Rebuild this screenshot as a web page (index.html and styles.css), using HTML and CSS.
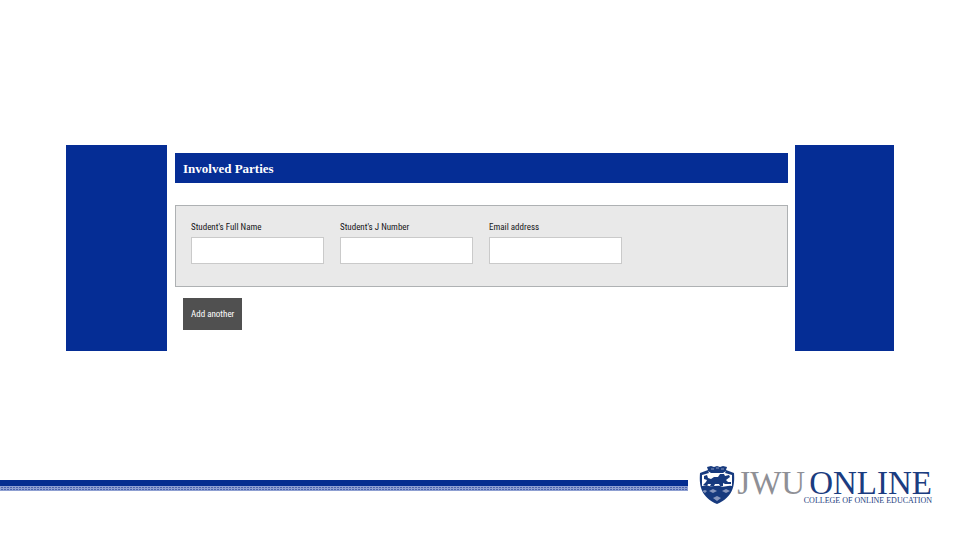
FILE: index.html
```html
<!DOCTYPE html>
<html lang="en">
<head>
    <meta charset="UTF-8">
    <meta name="viewport" content="width=device-width, initial-scale=1.0">
    <title>Involved Parties</title>
    <link rel="stylesheet" href="styles.css">
</head>
<body>
    <main class="stage">
        <form class="report-form">
            <h1 class="section-title">Involved Parties</h1>
            <div class="party">
                <div class="field">
                    <label for="full-name">Student's Full Name</label>
                    <input type="text" id="full-name">
                </div>
                <div class="field">
                    <label for="j-number">Student's J Number</label>
                    <input type="text" id="j-number">
                </div>
                <div class="field">
                    <label for="email">Email address</label>
                    <input type="email" id="email">
                </div>
            </div>
            <button type="button" class="add-btn">Add another</button>
        </form>
    </main>

    <footer class="footer">
        <div class="rule"></div>
        <div class="logo">
            <svg class="shield" viewBox="0 0 36 40" aria-hidden="true">
                <path fill="#173a7e" d="M8 2 L12 1 L15 2 L18 1 L21 2 L24 1 L28 2 L27 5 L35 8 C36 21 34 32 18 39 C2 32 0 21 1 8 L9 5 Z"/>
                <path fill="#fff" d="M3 10 L10 8 L9 6 L12 8 H24 L27 6 L26 8 L33 10 V21 C28 20 25 23 21 21 C17 20 14 22 10 21 C7 20 5 21 3 21 Z"/>
                <!-- lion -->
                <path fill="#173a7e" d="M5 11 L8 10 L9 13 L12 14 L15 12 L19 12 L21 9 L25 9 L26 11 L30 10 L31 12 L27 15 L29 17 L32 17 L32 19 L26 19 L24 18 L24 21 L21 21 L20 19 L16 19 L15 21 L11 21 L12 19 L9 19 L8 21 L4 20 L7 17 L8 15 L5 14 Z"/>
                <path fill="none" stroke="#8796bd" d="M12 4 H15 M17 3 H20 M22 4 H25"/>
                <!-- waves -->
                <path fill="#8796bd" d="M10 26 L14 24 L18 26 L14 28 Z M23 26 L27 24 L31 26 L27 28 Z M3 26 L6 25 L8 26 L6 28 Z M14 33 L18 31 L22 33 L18 36 Z"/>
            </svg>
            <div class="wordmark">
                <div class="wordmark-name"><span class="wordmark-jwu">JWU</span><span class="wordmark-online">ONLINE</span></div>
                <div class="wordmark-college">COLLEGE OF ONLINE EDUCATION</div>
            </div>
        </div>
    </footer>
</body>
</html>
```
FILE: styles.css
```css
* {
    box-sizing: border-box;
}
body {
    margin: 0;
    min-height: 100vh;
    display: flex;
    flex-direction: column;
    justify-content: space-between;
    background-color: #fff;
    font-family: "Roboto Condensed", Roboto, "Liberation Sans", sans-serif;
}
.stage {
    margin: 145px 66px 0;
    padding: 0 99px 0 101px;
    background: linear-gradient(#052d95, #052d95) left / 101px 100% no-repeat,
                linear-gradient(#052d95, #052d95) right / 99px 100% no-repeat;
}
.report-form {
    padding: 8px 7px 21px 8px;
}
.section-title {
    margin: 0 0 22px;
    padding: 1px 8px 0;
    background-color: #052d95;
    color: #fff;
    font-family: "Roboto Slab", "Liberation Serif", serif;
    font-size: 13px;
    font-weight: bold;
    line-height: 29px;
}
.party {
    display: flex;
    gap: 16px;
    padding: 15px;
    padding-bottom: 22px;
    border: 1px solid #aeb1b3;
    background-color: #e9e9e9;
}
.field {
    width: 133px;
}
.field label {
    display: block;
    margin-bottom: 4px;
    font-size: 9px;
    line-height: 12px;
    color: #161620;
}
.field input {
    display: block;
    width: 100%;
    height: 27px;
    padding: 0 6px;
    border: 1px solid #cacaca;
    background-color: #fff;
    font: inherit;
    font-size: 9px;
}
.add-btn {
    display: block;
    margin: 11px 0 0 8px;
    padding: 0 8px;
    border: none;
    background-color: #505050;
    color: #fff;
    font: inherit;
    font-size: 9px;
    line-height: 32px;
    cursor: pointer;
}
.footer {
    display: flex;
    align-items: flex-start;
    gap: 11px;
    padding: 0 28px 35px 0;
}
.rule {
    flex: 1;
    height: 11px;
    margin-top: 15px;
    border-top: 6px solid #052d90;
    background: repeating-linear-gradient(90deg, #8fa0d2 0 1px, transparent 1px 3px),
                repeating-linear-gradient(#8fa0d2 0 1px, #4c64ae 1px 2px);
}
.logo {
    display: flex;
    gap: 2px;
}
.shield {
    width: 36px;
    height: 40px;
}
.wordmark {
    font-family: "Liberation Serif", serif;
}
.wordmark-name {
    display: flex;
    gap: 4px;
    margin-top: 4px;
    font-size: 33px;
    line-height: 28px;
}
.wordmark-jwu {
    color: #8f9096;
}
.wordmark-online {
    color: #1b3c80;
}
.wordmark-college {
    color: #1b3c80;
    font-size: 8px;
    line-height: 8px;
    text-align: right;
}
```
